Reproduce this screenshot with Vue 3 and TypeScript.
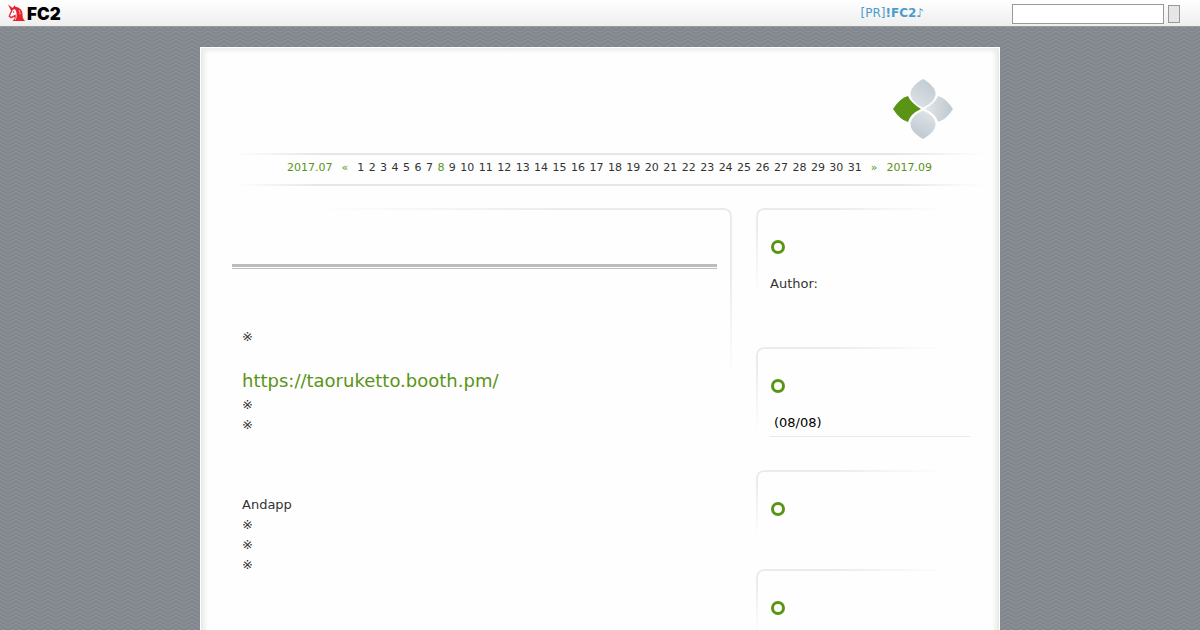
<script setup lang="ts">
interface Line {
  text: string
  href?: string
}

interface Plugin {
  id: string
  size: string
  text?: string
  link?: string
}

const today = 8
const days: number[] = Array.from({ length: 31 }, (_, i) => i + 1)

const lines: Line[] = [
  { text: '※' },
  { text: '' },
  { text: 'https://taoruketto.booth.pm/', href: 'https://taoruketto.booth.pm/' },
  { text: '※' },
  { text: '※' },
  { text: '' },
  { text: '' },
  { text: '' },
  { text: 'Andapp' },
  { text: '※' },
  { text: '※' },
  { text: '※' },
]

const plugins: Plugin[] = [
  { id: 'profile', size: 'tall', text: 'Author:' },
  { id: 'entries', size: 'medium', link: '(08/08)' },
  { id: 'comments', size: 'short' },
  { id: 'trackbacks', size: 'short' },
]
</script>

<template>
  <div class="page">
    <header class="bar">
      <a class="brand" href="#" aria-label="FC2">
        <svg class="horse" viewBox="0 0 17 18" aria-hidden="true">
          <path d="M0 0.500 L4.500 4 L6.500 1.500 L8 3 C12.500 3.500 14.500 7 14.500 10 C14.500 13 15 15 17 17 L4.500 17 C6.500 15.500 7 14 6.500 12.800 L3 14.500 L0.500 12.500 L3 6.500 Z" fill="#e8222c" />
          <path d="M4.600 6.300 L6.500 5 C8 6 8.600 8 8.600 10.500 C8.600 13 8.500 14.500 7.500 16 L6.800 16 C8 14 8 12 7.500 10.500 L3.200 12.800 L2 12 Z" fill="#fff" />
          <path d="M11 6 Q12.500 8 12 10.500" fill="none" stroke="#fff" stroke-width="0.600" />
          <circle cx="5.600" cy="8" r="0.700" fill="#e8222c" />
        </svg>
        <span class="name">FC2</span>
      </a>
      <a class="pr" href="#">[PR]<b>!FC2♪</b></a>
      <form class="search" @submit.prevent>
        <input type="text" aria-label="Search" />
        <button type="submit" aria-label="Search"></button>
      </form>
    </header>

    <main class="sheet">
      <div class="top">
        <svg class="clover" viewBox="0 0 60 60" aria-hidden="true">
          <defs>
            <linearGradient id="petal-up" x1="0" y1="1" x2="0.600" y2="0">
              <stop offset="0" stop-color="#dfe4e8" />
              <stop offset="1" stop-color="#c2ccd3" />
            </linearGradient>
            <linearGradient id="petal-down" x1="0.700" y1="0" x2="0.300" y2="1">
              <stop offset="0" stop-color="#dfe4e8" />
              <stop offset="1" stop-color="#bdc8cf" />
            </linearGradient>
            <linearGradient id="petal-right" x1="0" y1="0" x2="1" y2="0">
              <stop offset="0" stop-color="#e2e6e9" />
              <stop offset="1" stop-color="#bdc8cf" />
            </linearGradient>
          </defs>
          <path d="M0 30 Q7 19 15 17 Q17 23 28 30 Q17 35 15 43 Q7 41 0 30Z" fill="#5a9417" />
          <path d="M60 30 Q53 19 45 17 Q43 23 32 30 Q43 35 45 43 Q53 41 60 30Z" fill="url(#petal-right)" />
          <path d="M30 0 C37 4 43 9 42.500 16 Q41 24 30 28.500 Q19 24 17.500 16 C17 9 23 4 30 0Z" fill="url(#petal-up)" />
          <path d="M30 60 C37 56 43 51 42.500 44 Q41 36 30 31.500 Q19 36 17.500 44 C17 51 23 56 30 60Z" fill="url(#petal-down)" />
        </svg>
      </div>

      <nav class="calendar" aria-label="Calendar">
        <a href="#">2017.07</a>
        <a href="#">«</a>
        <span class="days">
          <template v-for="day in days" :key="day">
            <a v-if="day === today" href="#">{{ day }}</a>
            <span v-else>{{ day }}</span>{{ ' ' }}
          </template>
        </span>
        <a href="#">»</a>
        <a href="#">2017.09</a>
      </nav>

      <div class="columns">
        <article class="entry">
          <h2 class="title"></h2>
          <div class="body">
            <p v-for="(line, i) in lines" :key="i" :class="{ big: line.href }">
              <a v-if="line.href" :href="line.href">{{ line.text }}</a>
              <template v-else>{{ line.text }}</template>
            </p>
          </div>
        </article>

        <aside class="side">
          <section v-for="plugin in plugins" :key="plugin.id" class="plugin" :class="plugin.size">
            <span class="ring"></span>
            <p v-if="plugin.text">{{ plugin.text }}</p>
            <ul v-if="plugin.link">
              <li><a href="#">{{ plugin.link }}</a></li>
            </ul>
          </section>
        </aside>
      </div>
    </main>
  </div>
</template>

<style>
body {
  margin: 0;
}
</style>

<style scoped>
.page {
  box-sizing: border-box;
  min-height: 100vh;
  display: flex;
  flex-direction: column;
  font-family: "DejaVu Sans", "Noto Sans CJK JP", sans-serif;
  font-size: 13px;
  line-height: 20px;
  color: #333;
  background: #82878e url("data:image/svg+xml,%3Csvg xmlns='http://www.w3.org/2000/svg' width='16' height='4'%3E%3Cpath d='M0 -5L8 0L16 -5M0 -1L8 4L16 -1M0 3L8 8L16 3' fill='none' stroke='%238e949b' stroke-width='1'/%3E%3C/svg%3E");
}

a {
  color: #5a9417;
  text-decoration: none;
}

p,
h2,
ul {
  margin: 0;
  padding: 0;
  list-style: none;
}

.bar {
  display: flex;
  align-items: center;
  height: 26px;
  padding: 0 20px 0 8px;
  border-bottom: 1px solid #999;
  background: linear-gradient(#fff, #eee);
}

.brand {
  display: flex;
  align-items: center;
  gap: 2px;
  margin-right: auto;
}

.horse {
  width: 17px;
  height: 18px;
}

.name {
  padding-top: 2px;
  font: 900 17px/20px Inter, sans-serif;
  color: #000;
}

.pr {
  margin-right: 88px;
  font-size: 12px;
  color: #4c9bca;
}

.search {
  display: flex;
  align-items: center;
  gap: 4px;
  padding-top: 2px;
}

.search input {
  box-sizing: border-box;
  width: 152px;
  height: 20px;
  padding: 1px 4px;
  border: 1px solid #999;
  background: #fff;
}

.search button {
  box-sizing: border-box;
  width: 12px;
  height: 18px;
  padding: 0;
  border: 1px solid #999;
  background: #e6e6e6;
}

.sheet {
  box-sizing: border-box;
  flex: 1;
  width: 100%;
  max-width: 800px;
  margin: 20px auto 0;
  padding: 0 14px 0 31px;
  border: 1px solid #fff;
  border-bottom: 0;
  background:
    linear-gradient(#eceeea, transparent) top / 100% 6px no-repeat,
    linear-gradient(90deg, #e8e9e5, #fefefe) left / 7px 100% no-repeat,
    linear-gradient(270deg, #e8e9e5, #fefefe) right / 7px 100% no-repeat,
    #fefefe;
}

.top {
  display: flex;
  justify-content: flex-end;
  padding: 31px 32px 13px 0;
}

.clover {
  width: 60px;
  height: 60px;
}

.calendar {
  display: flex;
  align-items: baseline;
  justify-content: center;
  gap: 9px;
  height: 34px;
  line-height: 30px;
  padding-left: 2px;
  margin-bottom: 22px;
  font-size: 11px;
  background:
    linear-gradient(90deg, transparent, #e6e6e6 12%, #e6e6e6 88%, transparent) 0 1px / 100% 2px no-repeat,
    linear-gradient(90deg, transparent, #e6e6e6 12%, #e6e6e6 88%, transparent) 0 32px / 100% 2px no-repeat;
}

.days {
  font-size: 14px;
  line-height: 28px;
  white-space: nowrap;
}

.days > * {
  font-size: 11px;
}

.columns {
  display: flex;
  gap: 24px;
  padding-right: 15px;
}

.entry {
  position: relative;
  flex: 1;
  min-width: 0;
  padding: 0 15px 0 0;
}

.entry::before {
  content: "";
  position: absolute;
  inset: 0 0 auto auto;
  width: 420px;
  height: 170px;
  box-sizing: border-box;
  border: solid #ebebeb;
  border-width: 2px 2px 0 0;
  border-radius: 0 8px 0 0;
  pointer-events: none;
  mask-image: linear-gradient(90deg, transparent, #000 60%), linear-gradient(#000 40%, transparent);
  mask-composite: intersect;
}

.title {
  height: 56px;
  border-bottom: 3px solid #bbb;
}

.body {
  padding: 58px 10px 0;
  margin-top: 1px;
  border-top: 1px solid #bbb;
}

.body p {
  min-height: 20px;
}

.body .big {
  font-size: 18px;
  line-height: 28px;
}

.side {
  width: 214px;
}

.plugin {
  position: relative;
  box-sizing: border-box;
  padding: 31px 0 0 14px;
}

.plugin::before {
  content: "";
  position: absolute;
  inset: 0 auto auto 0;
  box-sizing: border-box;
  width: 190px;
  height: 86px;
  border: solid #ebebeb;
  border-width: 2px 0 0 2px;
  border-radius: 8px 0 0 0;
  pointer-events: none;
  mask-image: linear-gradient(270deg, transparent, #000 60%), linear-gradient(#000 20%, transparent);
  mask-composite: intersect;
}

.short::before {
  height: 66px;
}

.tall {
  min-height: 139px;
}

.medium {
  min-height: 123px;
}

.short {
  min-height: 99px;
}

.ring {
  display: block;
  box-sizing: border-box;
  width: 14px;
  height: 14px;
  margin: 1px 0 20px 1px;
  border: 3px solid #5a9417;
  border-radius: 50%;
}

.short:last-child {
  min-height: 60px;
}

.short .ring {
  margin-bottom: 0;
}

.plugin li {
  padding: 0 4px 3px;
  border-bottom: 1px solid #e9e9e9;
}

.plugin li a {
  color: #000;
}
</style>
